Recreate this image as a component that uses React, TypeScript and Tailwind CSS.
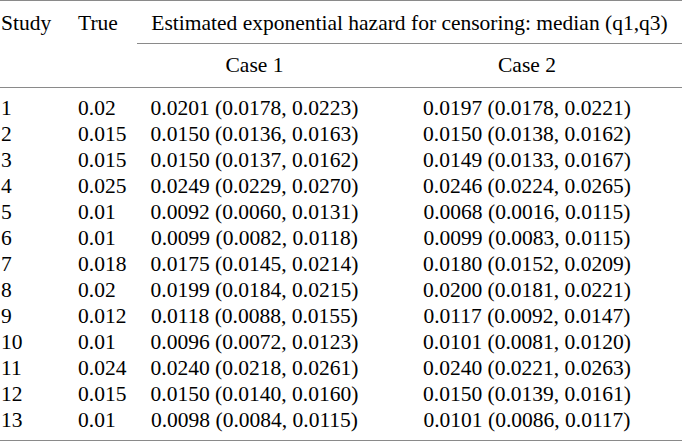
const rows: [string, string, string, string][] = [
  ['1', '0.02', '0.0201 (0.0178, 0.0223)', '0.0197 (0.0178, 0.0221)'],
  ['2', '0.015', '0.0150 (0.0136, 0.0163)', '0.0150 (0.0138, 0.0162)'],
  ['3', '0.015', '0.0150 (0.0137, 0.0162)', '0.0149 (0.0133, 0.0167)'],
  ['4', '0.025', '0.0249 (0.0229, 0.0270)', '0.0246 (0.0224, 0.0265)'],
  ['5', '0.01', '0.0092 (0.0060, 0.0131)', '0.0068 (0.0016, 0.0115)'],
  ['6', '0.01', '0.0099 (0.0082, 0.0118)', '0.0099 (0.0083, 0.0115)'],
  ['7', '0.018', '0.0175 (0.0145, 0.0214)', '0.0180 (0.0152, 0.0209)'],
  ['8', '0.02', '0.0199 (0.0184, 0.0215)', '0.0200 (0.0181, 0.0221)'],
  ['9', '0.012', '0.0118 (0.0088, 0.0155)', '0.0117 (0.0092, 0.0147)'],
  ['10', '0.01', '0.0096 (0.0072, 0.0123)', '0.0101 (0.0081, 0.0120)'],
  ['11', '0.024', '0.0240 (0.0218, 0.0261)', '0.0240 (0.0221, 0.0263)'],
  ['12', '0.015', '0.0150 (0.0140, 0.0160)', '0.0150 (0.0139, 0.0161)'],
  ['13', '0.01', '0.0098 (0.0084, 0.0115)', '0.0101 (0.0086, 0.0117)'],
];

export default function App() {
  return (
    <div className="w-[682px] h-[442px] bg-white text-black font-['Liberation_Serif','Times_New_Roman',serif] text-[21.5px] leading-[26px]">
      <div className="border-t border-b border-[#8a8a8a]">
        {/* header */}
        <div className="grid grid-cols-[78px_59px_235px_310px] border-b border-[#8a8a8a]">
          <div className="row-span-2 pt-[9px] pl-px">Study</div>
          <div className="row-span-2 pt-[9px]">True</div>
          <div className="col-span-2 pt-[9px] pb-[7px] text-center whitespace-nowrap border-b border-[#8a8a8a]">
            Estimated exponential hazard for censoring: median (q1,q3)
          </div>
          <div className="pt-[8px] pb-[9px] text-center">Case 1</div>
          <div className="pt-[8px] pb-[9px] text-center">Case 2</div>
        </div>
        {/* body */}
        <div className="grid grid-cols-[78px_59px_235px_310px] pt-[7px] pb-[7px]">
          {rows.map(([study, tru, c1, c2]) => (
            <div key={study} className="contents">
              <div className="pl-px">{study}</div>
              <div>{tru}</div>
              <div className="text-center whitespace-nowrap">{c1}</div>
              <div className="text-center whitespace-nowrap">{c2}</div>
            </div>
          ))}
        </div>
      </div>
    </div>
  );
}
